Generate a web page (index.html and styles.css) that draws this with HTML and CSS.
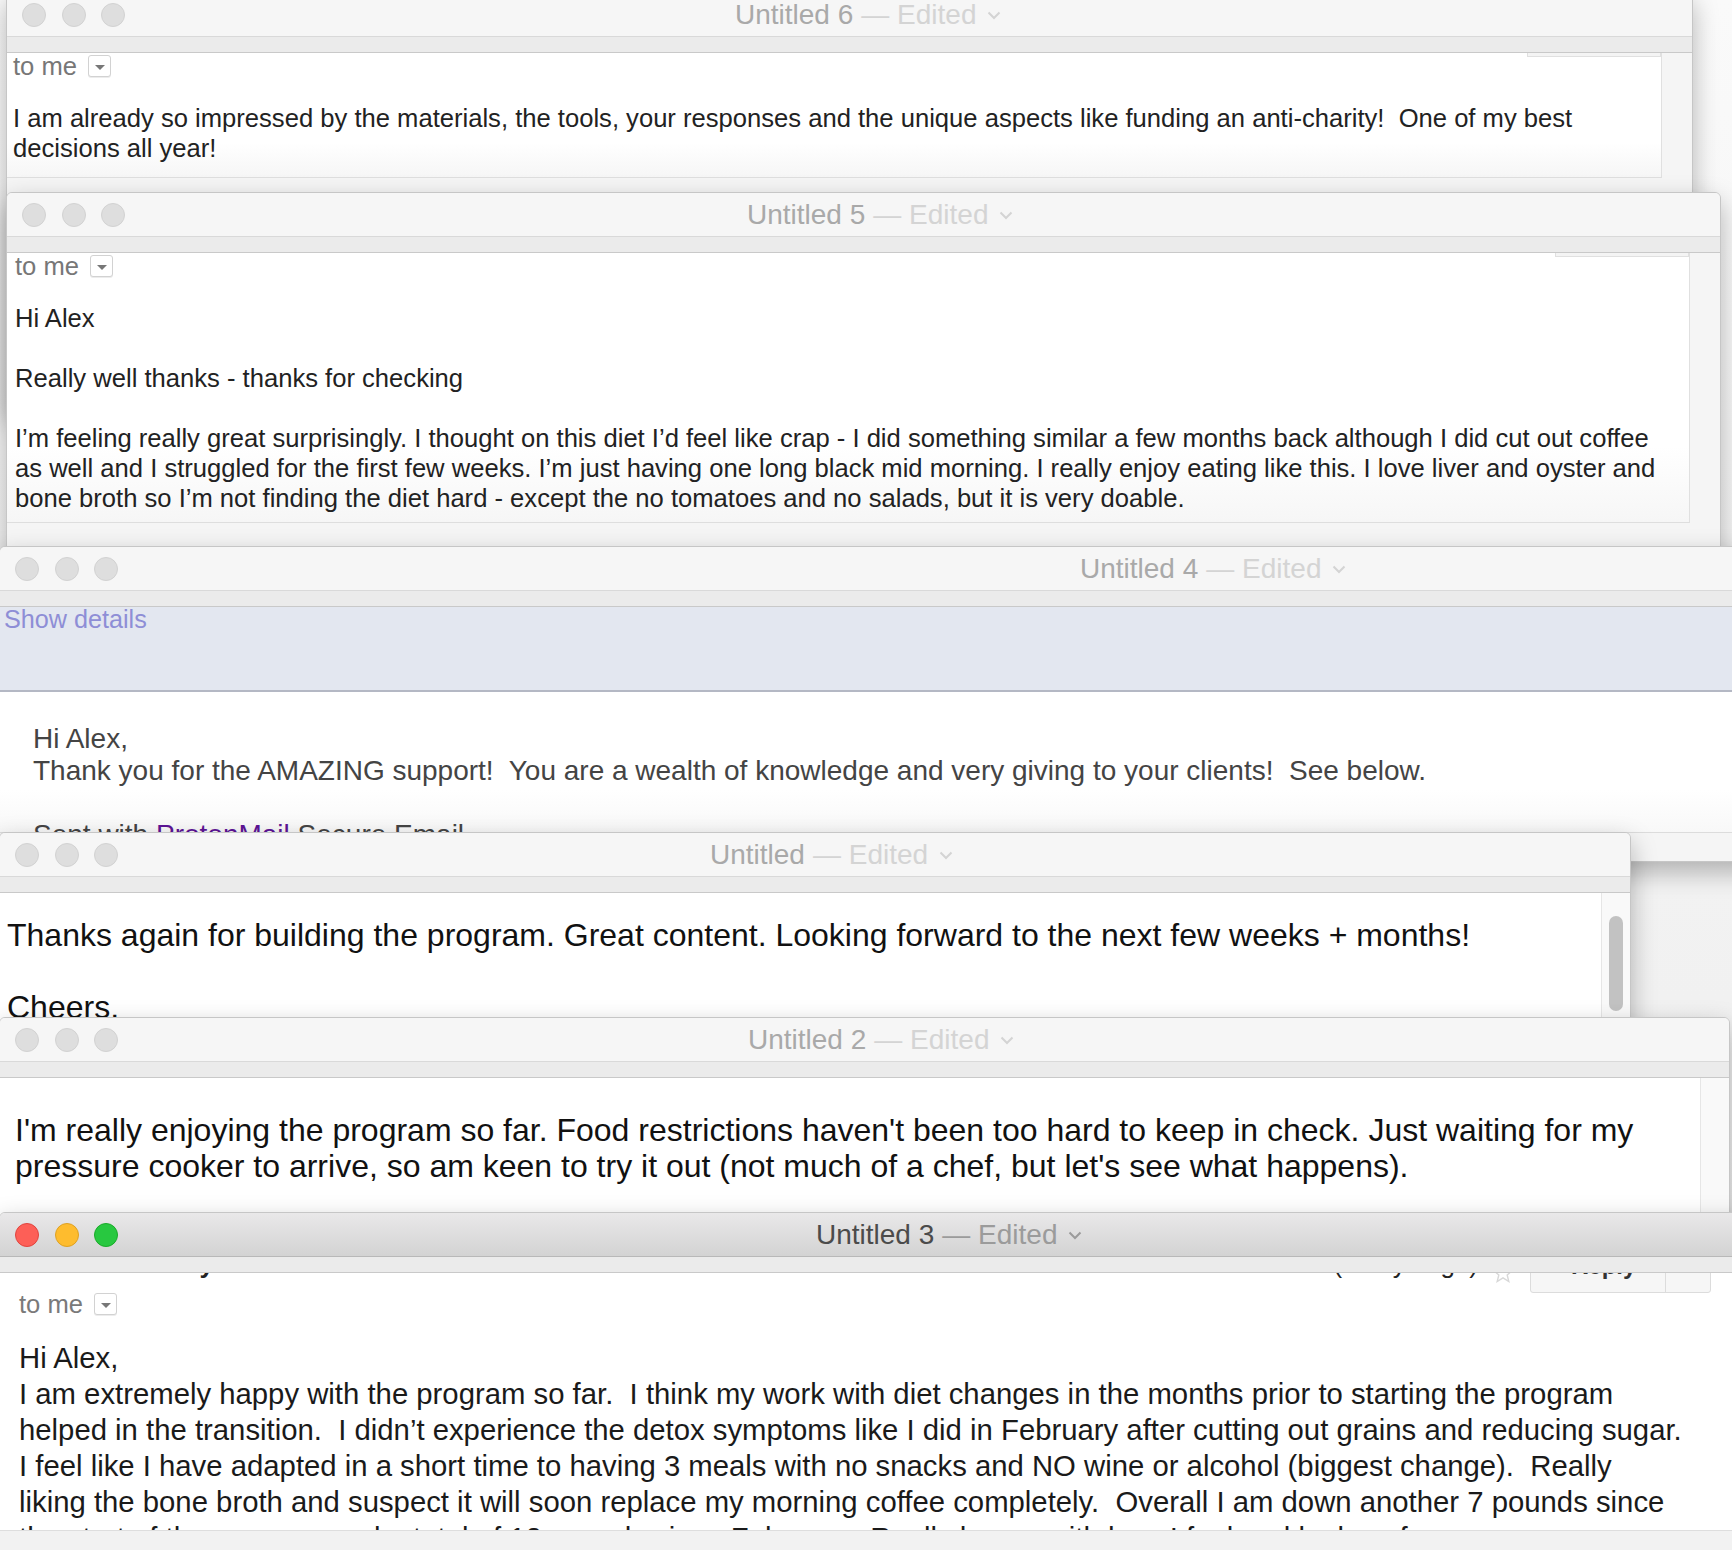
FILE: index.html
```html
<!DOCTYPE html>
<html lang="en">
<head>
    <meta charset="UTF-8">
    <title>Untitled 3 — Edited</title>
    <link rel="stylesheet" href="styles.css">
</head>
<body>

<div class="desktop">

    <!-- Untitled 6 (back-most) -->
    <section class="win win-6">
        <header class="titlebar">
            <div class="lights"><span></span><span></span><span></span></div>
            <div class="title"><span class="name">Untitled 6</span><span class="state">— Edited</span>
                <svg class="chev" width="14" height="9" viewBox="0 0 14 9"><path d="M1.5 1.5 L7 7 L12.5 1.5" fill="none" stroke="currentColor" stroke-width="2"/></svg>
            </div>
        </header>
        <div class="strip"></div>
        <div class="doc">
            <div class="panel panel-6">
                <div class="tab"></div>
                <div class="to-me">to me <span class="caret-box"></span></div>
                <div class="msg">I am already so impressed by the materials, the tools, your responses and the unique aspects like funding an anti-charity!&nbsp; One of my best<br>decisions all year!</div>
            </div>
        </div>
    </section>

    <!-- Untitled 5 -->
    <section class="win win-5">
        <header class="titlebar">
            <div class="lights"><span></span><span></span><span></span></div>
            <div class="title"><span class="name">Untitled 5</span><span class="state">— Edited</span>
                <svg class="chev" width="14" height="9" viewBox="0 0 14 9"><path d="M1.5 1.5 L7 7 L12.5 1.5" fill="none" stroke="currentColor" stroke-width="2"/></svg>
            </div>
        </header>
        <div class="strip"></div>
        <div class="doc">
            <div class="panel panel-5">
                <div class="tab"></div>
                <div class="to-me">to me <span class="caret-box"></span></div>
                <div class="msg">Hi Alex<br><br>Really well thanks - thanks for checking<br><br>I’m feeling really great surprisingly. I thought on this diet I’d feel like crap - I did something similar a few months back although I did cut out coffee<br>as well and I struggled for the first few weeks. I’m just having one long black mid morning. I really enjoy eating like this. I love liver and oyster and<br>bone broth so I’m not finding the diet hard - except the no tomatoes and no salads, but it is very doable.</div>
            </div>
        </div>
    </section>

    <!-- Untitled 4 -->
    <section class="win win-4">
        <header class="titlebar">
            <div class="lights"><span></span><span></span><span></span></div>
            <div class="title"><span class="name">Untitled 4</span><span class="state">— Edited</span>
                <svg class="chev" width="14" height="9" viewBox="0 0 14 9"><path d="M1.5 1.5 L7 7 L12.5 1.5" fill="none" stroke="currentColor" stroke-width="2"/></svg>
            </div>
        </header>
        <div class="strip"></div>
        <div class="doc">
            <div class="details">Show details</div>
            <div class="letter">Hi Alex,<br>Thank you for the AMAZING support!&nbsp; You are a wealth of knowledge and very giving to your clients!&nbsp; See below.<br><br>Sent with <a class="proton">ProtonMail</a> Secure Email</div>
            <div class="statusbar"></div>
        </div>
    </section>

    <!-- Untitled -->
    <section class="win win-1">
        <header class="titlebar">
            <div class="lights"><span></span><span></span><span></span></div>
            <div class="title"><span class="name">Untitled</span><span class="state">— Edited</span>
                <svg class="chev" width="14" height="9" viewBox="0 0 14 9"><path d="M1.5 1.5 L7 7 L12.5 1.5" fill="none" stroke="currentColor" stroke-width="2"/></svg>
            </div>
        </header>
        <div class="strip"></div>
        <div class="doc doc-scroll">
            <div class="page page-1">Thanks again for building the program. Great content. Looking forward to the next few weeks + months!<br><br>Cheers,</div>
            <div class="scrollbar"><div class="thumb"></div></div>
        </div>
    </section>

    <!-- Untitled 2 -->
    <section class="win win-2">
        <header class="titlebar">
            <div class="lights"><span></span><span></span><span></span></div>
            <div class="title"><span class="name">Untitled 2</span><span class="state">— Edited</span>
                <svg class="chev" width="14" height="9" viewBox="0 0 14 9"><path d="M1.5 1.5 L7 7 L12.5 1.5" fill="none" stroke="currentColor" stroke-width="2"/></svg>
            </div>
        </header>
        <div class="strip"></div>
        <div class="doc doc-scroll">
            <div class="page page-2">I'm really enjoying the program so far. Food restrictions haven't been too hard to keep in check. Just waiting for my<br>pressure cooker to arrive, so am keen to try it out (not much of a chef, but let's see what happens).</div>
            <div class="scrollbar"></div>
        </div>
    </section>

    <!-- Untitled 3 (front, active) -->
    <section class="win win-3 active">
        <header class="titlebar">
            <div class="lights"><span class="close"></span><span class="min"></span><span class="zoom"></span></div>
            <div class="title"><span class="name">Untitled 3</span><span class="state">— Edited</span>
                <svg class="chev" width="14" height="9" viewBox="0 0 14 9"><path d="M1.5 1.5 L7 7 L12.5 1.5" fill="none" stroke="currentColor" stroke-width="2"/></svg>
            </div>
        </header>
        <div class="strip"></div>
        <div class="doc doc-3">
            <div class="sender-row">
                <span class="sender">Emma Kennedy</span>
                <span class="when">(2 days ago)</span>
                <svg class="star" width="22" height="22" viewBox="0 0 22 22"><path d="M11 2 L13.6 8.2 L20.3 8.6 L15.2 12.9 L16.8 19.5 L11 15.9 L5.2 19.5 L6.8 12.9 L1.7 8.6 L8.4 8.2 Z" fill="none" stroke="#d8d8d8" stroke-width="1.4"/></svg>
                <div class="reply-group"><span class="reply">Reply</span><span class="more"></span></div>
            </div>
            <div class="to-me">to me <span class="caret-box"></span></div>
            <div class="page-3">Hi Alex,<br>I am extremely happy with the program so far.&nbsp; I think my work with diet changes in the months prior to starting the program<br>helped in the transition.&nbsp; I didn’t experience the detox symptoms like I did in February after cutting out grains and reducing sugar.<br>I feel like I have adapted in a short time to having 3 meals with no snacks and NO wine or alcohol (biggest change).&nbsp; Really<br>liking the bone broth and suspect it will soon replace my morning coffee completely.&nbsp; Overall I am down another 7 pounds since<br>the start of the program and a total of 12 pounds since February.&nbsp; Really happy with how I feel and look so far.</div>
        </div>
        <div class="footer"></div>
    </section>

</div>

</body>
</html>
```

FILE: styles.css
```css
* {
    box-sizing: border-box;
}

body {
    margin: 0;
    background-color: #f3f3f3;
    font-family: "Liberation Sans", Arial, sans-serif;
}

/* Desktop holding the stacked windows */
.desktop {
    position: relative;
    width: 1732px;
    height: 1550px;
    overflow: hidden;
    background: linear-gradient(#fafafa, #ececec);
}

.win {
    position: absolute;
    display: flex;
    flex-direction: column;
    background-color: #f5f5f5;
    border: 1px solid #c6c6c6;
    border-radius: 6px 6px 0 0;
    box-shadow: 0 10px 26px rgba(0, 0, 0, 0.28);
    overflow: hidden;
}

.titlebar {
    height: 44px;
    flex: none;
    display: flex;
    align-items: center;
    padding-left: 15px;
    background-color: #f6f6f6;
    border-bottom: 1px solid #d9d9d9;
}

.lights {
    display: flex;
    gap: 15.5px;
}

.lights span {
    width: 24px;
    height: 24px;
    border-radius: 50%;
    background-color: #dedede;
    border: 1px solid #d2d2d2;
}

.title {
    margin-left: calc(var(--title-x) - 119px);
    display: flex;
    align-items: center;
    gap: 8px;
    font-size: 28px;
    white-space: nowrap;
    color: #d4d4d4;
}

.title .name {
    color: #a9a9a9;
}

.title .chev {
    margin-left: 3px;
    margin-top: 2px;
}

.strip {
    height: 16px;
    flex: none;
    background-color: #ebebeb;
    border-bottom: 1px solid #c9c9c9;
}

.doc {
    flex: 1;
    position: relative;
    overflow: hidden;
}

/* Active window */
.active .titlebar {
    background: linear-gradient(#e9e8e9, #d3d3d3);
    border-bottom-color: #b8b8b8;
}

.active .title {
    color: #9b9b9b;
}

.active .title .name {
    color: #4b4b4b;
}

.active .lights .close {
    background-color: #fd5f57;
    border-color: #e0443e;
}

.active .lights .min {
    background-color: #febc2e;
    border-color: #dea123;
}

.active .lights .zoom {
    background-color: #28c840;
    border-color: #1aab29;
}

/* Window placement on the desktop */
.win-6 { left: 6px; top: -8px; width: 1687px; height: 420px; --title-x: 729px; }
.win-5 { left: 6px; top: 192px; width: 1715px; height: 420px; --title-x: 741px; }
.win-4 { left: -1px; top: 546px; width: 1780px; height: 316px; --title-x: 1081px; }
.win-1 { left: -1px; top: 832px; width: 1632px; height: 260px; --title-x: 711px; }
.win-2 { left: -1px; top: 1017px; width: 1731px; height: 260px; --title-x: 749px; }
.win-3 { left: -1px; top: 1212px; width: 1780px; height: 339px; --title-x: 817px; }

/* Mail panels in 6 and 5 */
.panel {
    position: relative;
    margin-right: 30px;
    background: linear-gradient(#ffffff 72%, #f6f6f6);
    border-right: 1px solid #e0e0e0;
    border-bottom: 1px solid #dedede;
}

.panel-6 {
    height: 125px;
    padding-left: 6px;
}

.panel-5 {
    height: 270px;
    padding-left: 8px;
}

.tab {
    position: absolute;
    top: 0;
    right: 0;
    width: 134px;
    height: 4px;
    background-color: #f4f4f4;
    border: 1px solid #e0e0e0;
    border-top: none;
}

.to-me {
    display: flex;
    align-items: center;
    gap: 11px;
    font-size: 25.6px;
    line-height: 26px;
    color: #777;
}

.caret-box {
    width: 23px;
    height: 22px;
    display: flex;
    align-items: center;
    justify-content: center;
    background-color: #fff;
    border: 1px solid #d2d2d2;
    border-radius: 3px;
    box-shadow: 0 1px 0 #ececec;
}

.caret-box::after {
    content: "";
    margin-top: 2px;
    border-left: 5px solid transparent;
    border-right: 5px solid transparent;
    border-top: 5px solid #777;
}

.msg {
    margin-top: 24px;
    font-size: 25.6px;
    line-height: 30px;
    color: #222;
    white-space: nowrap;
}

/* Untitled 4 */
.details {
    height: 85px;
    padding-left: 4px;
    font-size: 25.2px;
    line-height: 24px;
    color: #8e8ed6;
    background-color: #e3e7f0;
    border-bottom: 2px solid #b4b8c4;
}

.letter {
    height: 140px;
    padding: 31px 0 0 33px;
    font-size: 28px;
    line-height: 32px;
    color: #444;
    background: linear-gradient(#ffffff 70%, #f8f8f8);
    white-space: nowrap;
}

.proton {
    color: #5d1496;
}

.statusbar {
    height: 30px;
    background-color: #f5f5f5;
    border-top: 1px solid #dcdcdc;
}

/* Untitled and Untitled 2: plain text with a scroll track */
.doc-scroll {
    display: flex;
}

.page {
    flex: 1;
    background: linear-gradient(#ffffff 70%, #f7f7f7);
    color: #111;
    white-space: nowrap;
}

.page-1 {
    padding: 24px 0 0 7px;
    font-size: 32px;
    line-height: 36px;
}

.page-2 {
    padding: 34px 0 0 15px;
    font-size: 32px;
    line-height: 36px;
}

.scrollbar {
    width: 29px;
    flex: none;
    padding: 23px 7px 0 7px;
    background-color: #f9f9f9;
    border-left: 1px solid #e6e6e6;
}

.thumb {
    height: 95px;
    border-radius: 8px;
    background-color: #c2c2c2;
}

/* Untitled 3 */
.doc-3 {
    padding-left: 19px;
    background-color: #fff;
}

.sender-row {
    display: flex;
    align-items: flex-end;
    height: 40px;
    margin-top: -22px;
    padding-right: 67px;
    font-size: 26px;
    line-height: 26px;
    color: #222;
    white-space: nowrap;
}

.sender {
    font-weight: bold;
    padding-bottom: 14px;
}

.when {
    margin-left: auto;
    padding-bottom: 14px;
    color: #222;
}

.star {
    margin: 0 16px 7px 14px;
}

.reply-group {
    display: flex;
    width: 181px;
    height: 40px;
    margin-bottom: -2px;
    border: 1px solid #dcdcdc;
    border-radius: 0 0 3px 3px;
    background-color: #f6f6f6;
    font-size: 24px;
    line-height: 24px;
    font-weight: bold;
}

.reply {
    flex: 1;
    padding-left: 40px;
    color: #333;
    border-right: 1px solid #dcdcdc;
}

.more {
    width: 44px;
}

.doc-3 .to-me {
    color: #7a7a7a;
}

.page-3 {
    margin-top: 23px;
    font-size: 29.3px;
    line-height: 36px;
    color: #1a1a1a;
    white-space: nowrap;
}

.footer {
    height: 20px;
    flex: none;
    background-color: #f2f2f2;
    border-top: 1px solid #dedede;
}
```
